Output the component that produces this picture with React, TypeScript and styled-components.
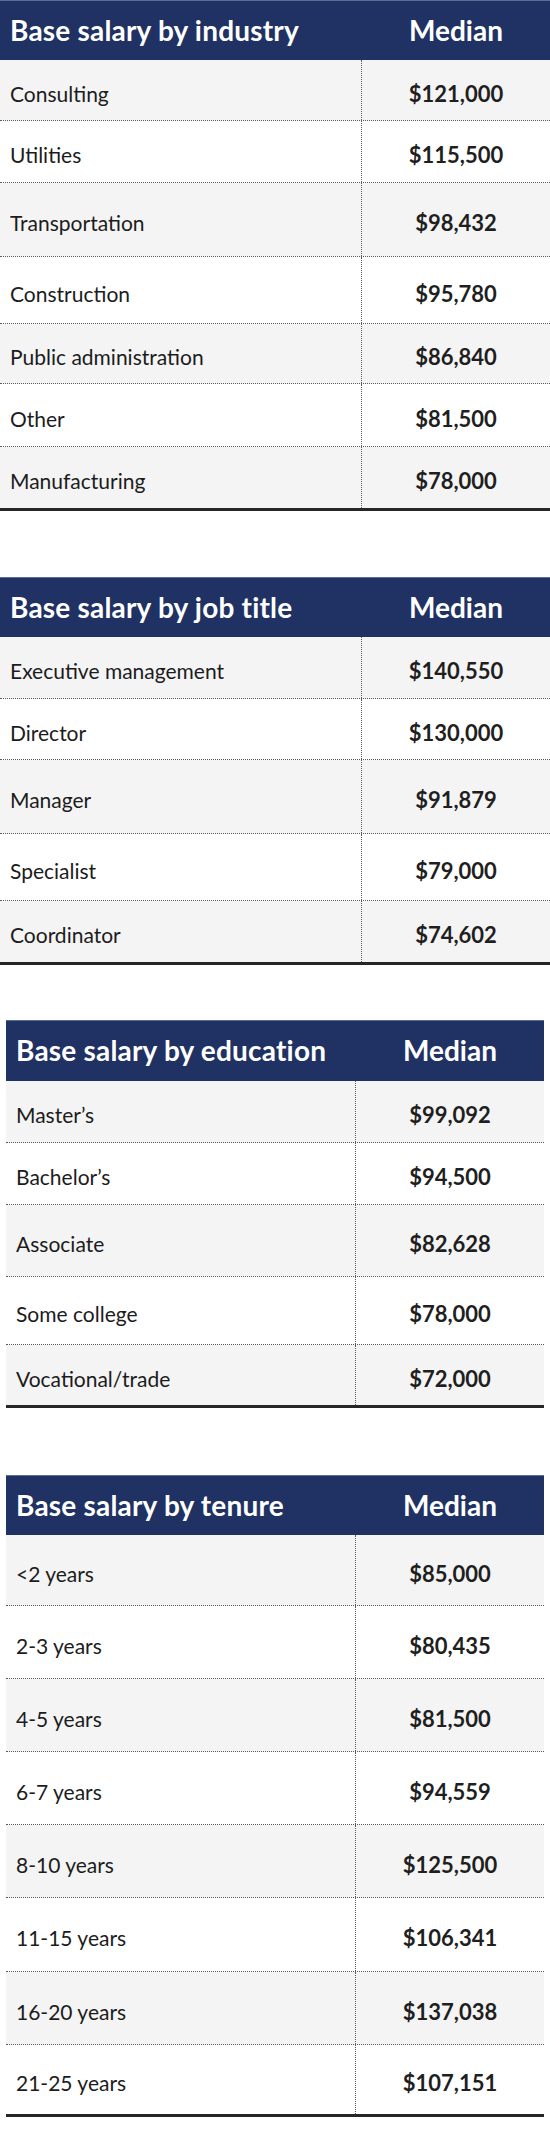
import styled, { createGlobalStyle } from 'styled-components';

const GlobalStyle = createGlobalStyle`
  body {
    margin: 0;
    background: #ffffff;
    font-family: Lato, "Noto Sans", "Liberation Sans", sans-serif;
  }
`

type Row = [string, string, number];

type SalaryTable = {
  title: string;
  top: number;
  inset: boolean;
  headHeight: number;
  rows: Row[];
};

// row heights are measured between the dotted rules of the reference
const tables: SalaryTable[] = [
  {
    title: 'Base salary by industry',
    top: 0,
    inset: false,
    headHeight: 60,
    rows: [
      ['Consulting', '$121,000', 61],
      ['Utilities', '$115,500', 62],
      ['Transportation', '$98,432', 74],
      ['Construction', '$95,780', 67],
      ['Public administration', '$86,840', 60],
      ['Other', '$81,500', 63],
      ['Manufacturing', '$78,000', 61],
    ],
  },
  {
    title: 'Base salary by job title',
    top: 66,
    inset: false,
    headHeight: 60,
    rows: [
      ['Executive management', '$140,550', 62],
      ['Director', '$130,000', 61],
      ['Manager', '$91,879', 74],
      ['Specialist', '$79,000', 67],
      ['Coordinator', '$74,602', 61],
    ],
  },
  {
    title: 'Base salary by education',
    top: 55,
    inset: true,
    headHeight: 61,
    rows: [
      ['Master’s', '$99,092', 62],
      ['Bachelor’s', '$94,500', 62],
      ['Associate', '$82,628', 72],
      ['Some college', '$78,000', 68],
      ['Vocational/trade', '$72,000', 60],
    ],
  },
  {
    title: 'Base salary by tenure',
    top: 67,
    inset: true,
    headHeight: 60,
    rows: [
      ['<2 years', '$85,000', 71],
      ['2-3 years', '$80,435', 73],
      ['4-5 years', '$81,500', 73],
      ['6-7 years', '$94,559', 73],
      ['8-10 years', '$125,500', 73],
      ['11-15 years', '$106,341', 74],
      ['16-20 years', '$137,038', 73],
      ['21-25 years', '$107,151', 69],
    ],
  },
];

const Page = styled.main`
  display: flex;
  flex-direction: column;
  width: 550px;
`

const Table = styled.section<{ $top: number; $inset: boolean }>`
  margin: ${(p) => p.$top}px ${(p) => (p.$inset ? '6px' : '0')} 0;
  display: flex;
  flex-direction: column;
`

const Head = styled.div<{ $h: number }>`
  display: grid;
  grid-template-columns: 1fr 188px;
  align-items: center;
  height: ${(p) => p.$h}px;
  background: #1f3263;
  border-top: 1px solid #5d6c92;
  box-sizing: border-box;
  color: #ffffff;
  font-weight: 700;
  font-size: 28px;
  letter-spacing: 0.2px;
`

const HeadTitle = styled.div`
  padding-left: 10px;
  padding-bottom: 2px;
`

const HeadMedian = styled.div`
  text-align: center;
  padding-bottom: 2px;
  letter-spacing: 0;
`

const BodyRow = styled.div<{ $h: number; $shade: boolean; $last: boolean }>`
  display: grid;
  grid-template-columns: 1fr 188px;
  height: ${(p) => (p.$last ? p.$h + 3 : p.$h)}px;
  box-sizing: border-box;
  background: ${(p) => (p.$shade ? '#f4f4f4' : '#ffffff')};
  border-bottom: ${(p) => (p.$last ? '3px solid #262626' : '1px dotted #5c5c5c')};
`

const Label = styled.div`
  display: flex;
  align-items: center;
  padding: 6px 0 0 10px;
  border-right: 1px dotted #5c5c5c;
  font-size: 21px;
  color: #1c1c1c;
`

const Value = styled.div`
  display: flex;
  align-items: center;
  justify-content: center;
  padding-top: 6px;
  font-size: 22px;
  font-weight: 700;
  color: #1f1f1f;
`

export default function App() {
  return (
    <Page>
      <GlobalStyle />
      {tables.map((t) => (
        <Table key={t.title} $top={t.top} $inset={t.inset}>
          <Head $h={t.headHeight}>
            <HeadTitle>{t.title}</HeadTitle>
            <HeadMedian>Median</HeadMedian>
          </Head>
          {t.rows.map(([label, value, h], i) => (
            <BodyRow key={label} $h={h} $shade={i % 2 === 0} $last={i === t.rows.length - 1}>
              <Label>{label}</Label>
              <Value>{value}</Value>
            </BodyRow>
          ))}
        </Table>
      ))}
    </Page>
  );
}
